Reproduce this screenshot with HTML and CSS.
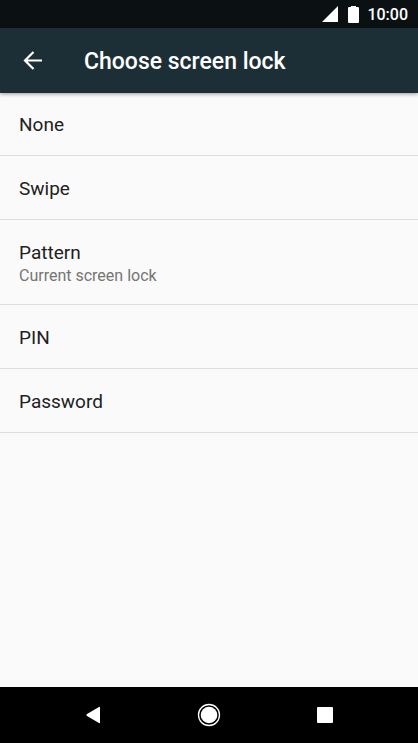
FILE: index.html
```html
<!DOCTYPE html>
<html lang="en">
<head>
<meta charset="utf-8">
<meta name="viewport" content="width=device-width, initial-scale=1">
<title>Choose screen lock</title>
<link rel="stylesheet" href="styles.css">
</head>
<body>
<div class="status">
  <svg class="signal" viewBox="0 0 16 16" aria-hidden="true"><path d="M16 0v16H0z"/></svg>
  <svg class="battery" viewBox="0 0 11 17" aria-hidden="true"><path d="M3 0h5v1h2q1 0 1 1v14q0 1-1 1H1q-1 0-1-1V2q0-1 1-1h2z"/></svg>
  <time class="clock">10:00</time>
</div>
<header class="bar">
  <button class="back" type="button" aria-label="Navigate up">
    <svg viewBox="0 0 20 20" aria-hidden="true"><path d="M19 9.500H2M10.500 1 2 9.500l8.500 8.500"/></svg>
  </button>
  <h1 class="title">Choose screen lock</h1>
</header>
<main class="content">
  <ul class="list">
    <li class="item"><button class="option" type="button"><span class="name">None</span></button></li>
    <li class="item"><button class="option" type="button"><span class="name">Swipe</span></button></li>
    <li class="item"><button class="option" type="button"><span class="name">Pattern</span><span class="summary">Current screen lock</span></button></li>
    <li class="item"><button class="option" type="button"><span class="name">PIN</span></button></li>
    <li class="item"><button class="option" type="button"><span class="name">Password</span></button></li>
  </ul>
</main>
<nav class="nav" aria-label="System">
  <button class="key" type="button" aria-label="Back"><svg viewBox="0 0 24 24"><path d="M19 4.500v15q0 1-1 .5L6 13q-1.500-1 0-2L18 4q1-.5 1 .5z"/></svg></button>
  <button class="key" type="button" aria-label="Home"><svg viewBox="0 0 24 24"><circle cx="12" cy="12" r="8.300"/><circle class="ring" cx="12" cy="12" r="10.500"/></svg></button>
  <button class="key" type="button" aria-label="Recent apps"><svg viewBox="0 0 24 24"><rect x="4" y="4" width="16" height="16" rx="1"/></svg></button>
</nav>
</body>
</html>
```
FILE: styles.css
```css
* {
  box-sizing: border-box;
}

body {
  margin: 0;
  min-height: 100vh;
  display: flex;
  flex-direction: column;
  background: #fafafa;
  color: #212121;
  font-family: Roboto, "Liberation Sans", sans-serif;
}

button {
  margin: 0;
  padding: 0;
  border: 0;
  background: none;
  color: inherit;
  font: inherit;
}

svg {
  display: block;
  fill: #fff;
}

.status {
  display: flex;
  align-items: center;
  justify-content: flex-end;
  height: 28px;
  padding-right: 10px;
  background: #0b1013;
  color: #fff;
}

.signal {
  width: 16px;
  height: 16px;
  margin-right: 10px;
}

.battery {
  width: 11px;
  height: 17px;
  margin-right: 8px;
}

.clock {
  padding-top: 2px;
  font-size: 16px;
  font-weight: 500;
  line-height: 20px;
}

.bar {
  display: flex;
  align-items: center;
  height: 65px;
  padding-left: 19px;
  background: #1d2f36;
  color: #fff;
  box-shadow: 0 1px 4px rgba(0, 0, 0, 0.4);
}

.back {
  width: 28px;
  height: 28px;
  padding: 4px;
  margin-right: 37px;
}

.back svg {
  width: 20px;
  height: 20px;
  fill: none;
  stroke: #fff;
  stroke-width: 2.2;
}

.title {
  margin: 0;
  padding-top: 2px;
  font-size: 23px;
  font-weight: 500;
  line-height: 28px;
}

.content {
  flex: 1;
}

.list {
  margin: -1px 0 0;
  padding: 0;
  list-style: none;
}

.item {
  border-bottom: 1px solid #dedede;
}

.option {
  display: flex;
  flex-direction: column;
  width: 100%;
  padding: 20px 19px 18px;
  text-align: left;
}

.name {
  font-size: 19px;
  line-height: 25px;
}

.summary {
  color: #757575;
  font-size: 16px;
  line-height: 21px;
}

.nav {
  display: flex;
  justify-content: center;
  height: 56px;
  background: #000;
}

.key {
  display: grid;
  place-items: center;
  width: 116px;
}

.key svg {
  width: 24px;
  height: 24px;
}

.ring {
  fill: none;
  stroke: #fff;
  stroke-width: 1.3;
}
```
